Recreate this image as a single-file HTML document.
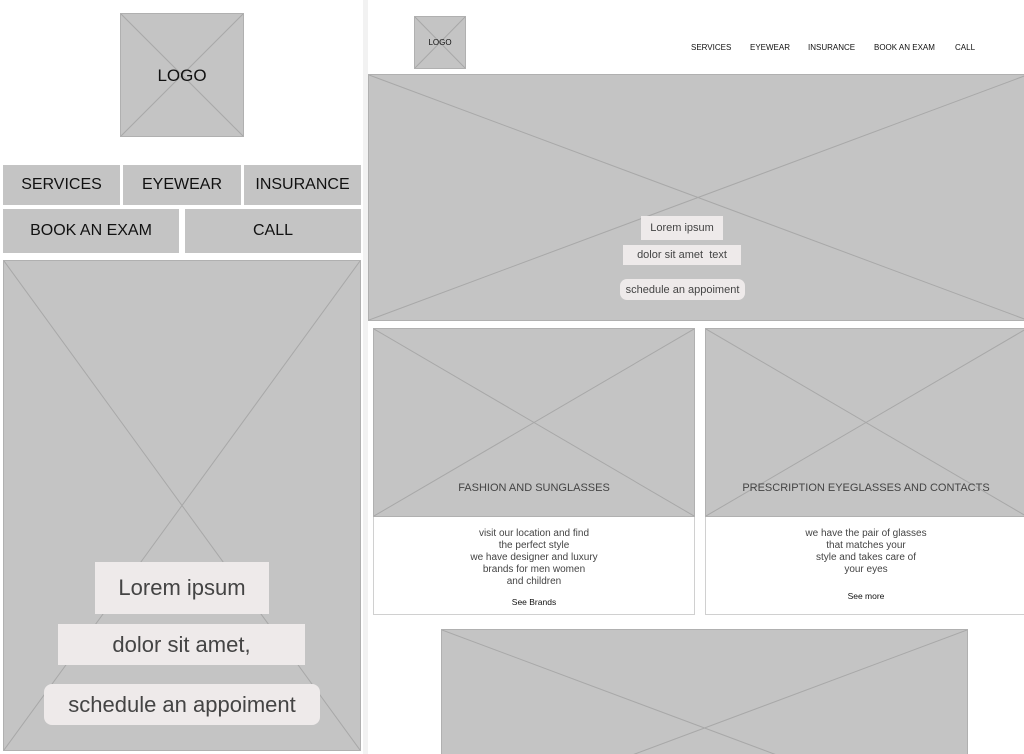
<!DOCTYPE html>
<html style="overflow:hidden;height:754px"><head><meta charset="utf-8"><style>
*{margin:0;padding:0;box-sizing:border-box}
html,body{width:1024px;height:754px;overflow:hidden}
body{background:#fff;position:relative;font-family:"Liberation Sans",sans-serif;color:#222}
.a{position:absolute}
.ph{position:absolute;background:#c4c4c4;border:1px solid #b0b0b0;overflow:hidden}
.ph svg{position:absolute;left:0;top:0;width:100%;height:100%}
.nb{position:absolute;background:#c4c4c4;display:flex;align-items:center;justify-content:center;font-size:16px;color:#111}
.lb{position:absolute;background:#eeeaea;display:flex;align-items:center;justify-content:center;color:#444}
.t{position:absolute;text-align:center;color:#444}
</style></head><body>
<div class="a" style="left:363px;top:0;width:5px;height:754px;background:#f2f2f2"></div>

<div class="ph" style="left:120px;top:13px;width:124px;height:124px"><svg viewBox="0 0 100 100" preserveAspectRatio="none"><line x1="0" y1="0" x2="100" y2="100" stroke="#a8a8a8" vector-effect="non-scaling-stroke"/><line x1="100" y1="0" x2="0" y2="100" stroke="#a8a8a8" vector-effect="non-scaling-stroke"/></svg><div class="a" style="left:0;right:0;top:52px;text-align:center;font-size:17px;color:#111">LOGO</div></div>
<div class="nb" style="left:3px;top:165px;width:117px;height:40px">SERVICES</div>
<div class="nb" style="left:123px;top:165px;width:118px;height:40px">EYEWEAR</div>
<div class="nb" style="left:244px;top:165px;width:117px;height:40px">INSURANCE</div>
<div class="nb" style="left:3px;top:209px;width:176px;height:44px">BOOK AN EXAM</div>
<div class="nb" style="left:185px;top:209px;width:176px;height:44px">CALL</div>
<div class="ph" style="left:3px;top:260px;width:358px;height:491px"><svg viewBox="0 0 100 100" preserveAspectRatio="none"><line x1="0" y1="0" x2="100" y2="100" stroke="#a8a8a8" vector-effect="non-scaling-stroke"/><line x1="100" y1="0" x2="0" y2="100" stroke="#a8a8a8" vector-effect="non-scaling-stroke"/></svg></div>
<div class="lb" style="left:95px;top:562px;width:174px;height:52px;font-size:22px">Lorem ipsum</div>
<div class="lb" style="left:58px;top:624px;width:247px;height:41px;font-size:22px">dolor sit amet,</div>
<div class="lb" style="left:44px;top:684px;width:276px;height:41px;font-size:22px;border-radius:8px">schedule an appoiment</div>

<div class="ph" style="left:414px;top:16px;width:52px;height:53px"><svg viewBox="0 0 100 100" preserveAspectRatio="none"><line x1="0" y1="0" x2="100" y2="100" stroke="#a8a8a8" vector-effect="non-scaling-stroke"/><line x1="100" y1="0" x2="0" y2="100" stroke="#a8a8a8" vector-effect="non-scaling-stroke"/></svg><div class="a" style="left:0;right:0;top:21px;text-align:center;font-size:8px;color:#111">LOGO</div></div>
<div class="a" style="left:691px;top:43px;font-size:8px;color:#111">SERVICES</div>
<div class="a" style="left:750px;top:43px;font-size:8px;color:#111">EYEWEAR</div>
<div class="a" style="left:808px;top:43px;font-size:8px;color:#111">INSURANCE</div>
<div class="a" style="left:874px;top:43px;font-size:8px;color:#111">BOOK AN EXAM</div>
<div class="a" style="left:955px;top:43px;font-size:8px;color:#111">CALL</div>
<div class="ph" style="left:368px;top:74px;width:660px;height:247px"><svg viewBox="0 0 100 100" preserveAspectRatio="none"><line x1="0" y1="0" x2="100" y2="100" stroke="#a8a8a8" vector-effect="non-scaling-stroke"/><line x1="100" y1="0" x2="0" y2="100" stroke="#a8a8a8" vector-effect="non-scaling-stroke"/></svg></div>
<div class="lb" style="left:641px;top:216px;width:82px;height:24px;font-size:11px">Lorem ipsum</div>
<div class="lb" style="left:623px;top:245px;width:118px;height:20px;font-size:11px">dolor sit amet&nbsp; text</div>
<div class="lb" style="left:620px;top:279px;width:125px;height:21px;font-size:11px;border-radius:7px">schedule an appoiment</div>

<div class="a" style="left:373px;top:328px;width:322px;height:287px;border:1px solid #d0d0d0"></div>
<div class="ph" style="left:373px;top:328px;width:322px;height:189px"><svg viewBox="0 0 100 100" preserveAspectRatio="none"><line x1="0" y1="0" x2="100" y2="100" stroke="#a8a8a8" vector-effect="non-scaling-stroke"/><line x1="100" y1="0" x2="0" y2="100" stroke="#a8a8a8" vector-effect="non-scaling-stroke"/></svg><div class="a" style="left:0;right:0;top:153px;text-align:center;font-size:11px;color:#444">FASHION AND SUNGLASSES</div></div>
<div class="t" style="left:373px;width:322px;top:528px;font-size:10px;line-height:12px">visit our location and find<br>the perfect style<br>we have designer and luxury<br>brands for men women<br>and children</div>
<div class="t" style="left:373px;width:322px;top:597px;font-size:8.5px;color:#111">See Brands</div>

<div class="a" style="left:705px;top:328px;width:322px;height:287px;border:1px solid #d0d0d0"></div>
<div class="ph" style="left:705px;top:328px;width:322px;height:189px"><svg viewBox="0 0 100 100" preserveAspectRatio="none"><line x1="0" y1="0" x2="100" y2="100" stroke="#a8a8a8" vector-effect="non-scaling-stroke"/><line x1="100" y1="0" x2="0" y2="100" stroke="#a8a8a8" vector-effect="non-scaling-stroke"/></svg><div class="a" style="left:0;right:0;top:153px;text-align:center;font-size:11px;color:#444;white-space:nowrap">PRESCRIPTION EYEGLASSES AND CONTACTS</div></div>
<div class="t" style="left:705px;width:322px;top:528px;font-size:10px;line-height:12px">we have the pair of glasses<br>that matches your<br>style and takes care of<br>your eyes</div>
<div class="t" style="left:705px;width:322px;top:591px;font-size:8.5px;color:#111">See more</div>

<div class="a" style="left:441px;top:629px;width:527px;height:125px;overflow:hidden">
<div class="ph" style="left:0;top:0;width:527px;height:198px"><svg viewBox="0 0 100 100" preserveAspectRatio="none"><line x1="0" y1="0" x2="100" y2="100" stroke="#a8a8a8" vector-effect="non-scaling-stroke"/><line x1="100" y1="0" x2="0" y2="100" stroke="#a8a8a8" vector-effect="non-scaling-stroke"/></svg></div>
</div>
</body></html>
